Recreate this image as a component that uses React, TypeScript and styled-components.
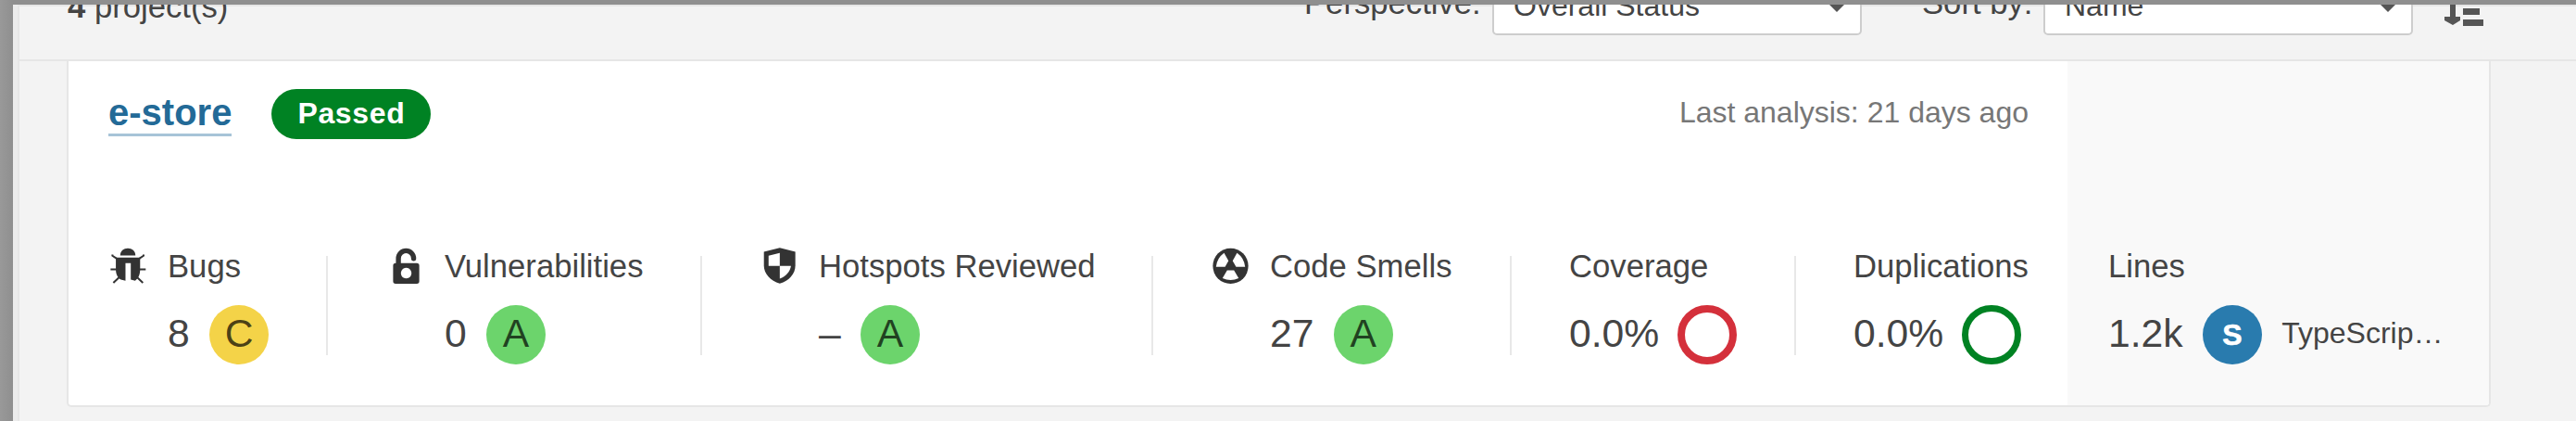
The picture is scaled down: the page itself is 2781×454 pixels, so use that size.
import React from "react";
import styled, { createGlobalStyle } from "styled-components";

const Global = createGlobalStyle`
  * { box-sizing: border-box; }
  body { margin: 0; background: #f3f3f3; font-family: "Liberation Sans", Arial, sans-serif; color: #444; }
`;

const Backdrop = styled.div`
  height: 454px;
  padding: 5px 0 0 14px;
  background: linear-gradient(90deg, #999 0, #8f8f8f 14px);
  overflow: hidden;
`;

const Panel = styled.div`
  height: 449px;
  padding-left: 5px;
  background: #ececec;
  overflow: hidden;
`;

const Content = styled.main`
  height: 100%;
  border-left: 2px solid #e6e6e6;
  background: #f3f3f3;
`;

const TopBar = styled.header`
  display: flex;
  align-items: flex-end;
  height: 61px;
  padding-left: 52px;
  border-bottom: 2px solid #e6e6e6;
  box-shadow: inset 0 2px 0 #e6e6e6;
  overflow: hidden;
`;

const BarText = styled.span<{ $bottom: number; $width: number }>`
  flex: none;
  width: ${(p) => p.$width}px;
  margin-bottom: ${(p) => p.$bottom}px;
  font-size: 34.67px;
  line-height: 40px;
  white-space: nowrap;
`;

const Select = styled.div<{ $gap: number }>`
  flex: none;
  display: flex;
  align-items: center;
  justify-content: space-between;
  width: 399px;
  height: 64px;
  margin: 0 ${(p) => p.$gap}px 26px 0;
  padding: 0 14px 0 21px;
  border: 2px solid #cdcdcd;
  border-radius: 5px;
  background: #fff;
  font-size: 32px;
  line-height: 38px;
`;

const Caret = styled.i`
  border: 11px solid transparent;
  border-top-color: #555;
  border-bottom: 0;
  margin-bottom: -2px;
`;

const SortIcon = styled.svg`
  flex: none;
  width: 44px;
  height: 43px;
  margin-bottom: 29px;
`;

const Card = styled.article`
  display: flex;
  width: 2617px;
  height: 373px;
  margin-left: 51px;
  border: solid #e6e6e6;
  border-width: 0 2px 2px;
  border-radius: 0 0 5px 5px;
  background: #fff;
  overflow: hidden;
`;

const Main = styled.section`
  flex: 1;
  padding-left: 43px;
`;

const Side = styled.aside`
  width: 455px;
  padding: 210px 0 0 44px;
  background: #f9f9f9;
`;

const CardHead = styled.div`
  display: flex;
  align-items: flex-start;
  height: 210px;
  padding: 30px 42px 0 0;
`;

const ProjectLink = styled.a`
  height: 51px;
  border-bottom: 3px solid #a7c4d8;
  color: #236a97;
  font-size: 40px;
  font-weight: 700;
  line-height: 50px;
`;

const Badge = styled.span`
  width: 172px;
  height: 54px;
  margin-left: 43px;
  border-radius: 27px;
  background: #008223;
  color: #fff;
  font-size: 32px;
  font-weight: 700;
  line-height: 52px;
  letter-spacing: 0.64px;
  text-align: center;
`;

const Analysis = styled.span`
  margin-left: auto;
  color: #777;
  font-size: 32px;
  line-height: 51px;
`;

const Measures = styled.div`
  display: grid;
  grid-template-columns: 235px 404px 487px 387px 307px 1fr;
  grid-template-rows: 107px;
`;

const Measure = styled.div`
  padding-left: 62px;
  border-left: 2px solid #e8e8e8;
  &:first-child { padding-left: 0; border-left: 0; }
`;

const Label = styled.div`
  display: flex;
  align-items: center;
  gap: 21px;
  height: 45px;
  margin-top: -11px;
  font-size: 34.67px;
  white-space: nowrap;
`;

const Icon = styled.svg`
  flex: none;
  width: 43px;
  height: 43px;
  margin-bottom: 2px;
  fill: #333;
`;

const ValueRow = styled.div<{ $indent?: boolean; $gap?: number }>`
  display: flex;
  align-items: center;
  gap: ${(p) => p.$gap ?? 21.3}px;
  height: 64px;
  margin-top: 19px;
  padding-left: ${(p) => (p.$indent ? 64 : 0)}px;
  font-size: 42.67px;
  white-space: nowrap;
`;

const Value = styled.span`
  line-height: 50px;
  margin-bottom: 4px;
`;

const Rating = styled.span<{ $color: string }>`
  width: 64px;
  height: 64px;
  border-radius: 50%;
  background: ${(p) => p.$color};
  color: rgba(0, 0, 0, 0.7);
  line-height: 60px;
  text-align: center;
`;

const Ring = styled.span<{ $color: string; $size: number }>`
  width: 64px;
  height: 64px;
  border: ${(p) => p.$size}px solid ${(p) => p.$color};
  border-radius: 50%;
`;

const SizeDot = styled(Rating)`
  color: #fff;
  font-size: 32px;
  font-weight: 700;
  line-height: 64px;
  -webkit-text-stroke: 0.6px #fff;
`;

const Language = styled.span`
  font-size: 32px;
  line-height: 38px;
  margin-bottom: 5px;
`;

const BugIcon = () => (
  <Icon viewBox="0 0 128 128">
    <path d="M38 31C38 17 49 8 62.500 8S87 17 87 31z" />
    <path d="M24 38H102V76C102 94 95 107 86 112L72 109V56H55V112L40 109C30 102 24 92 24 76z" />
    <path d="M13 28V32L28 42M113 28V32L98 42M7 76H26M100 76H120M16 119L34 102M111 119L93 102" fill="none" stroke="#333" strokeWidth="6" />
  </Icon>
);

const LockIcon = () => (
  <Icon viewBox="0 0 128 128">
    <path fillRule="evenodd" d="M33 56H101Q109 56 109 64V114Q109 122 101 122H33Q25 122 25 114V64Q25 56 33 56zM67 71a17 17 0 1 0 .1 0z" />
    <path d="M42 58V41A24.500 25 0 0 1 91 41" fill="none" stroke="#333" strokeWidth="16" strokeLinecap="round" />
  </Icon>
);

const ShieldIcon = () => (
  <Icon viewBox="0 0 128 128">
    <path d="M65 7L115 19V63C115 90 95 112 65 121C35 112 14 90 14 63V19z" />
    <path d="M65 23V65H29V32zM65 65H101C98 84 85 98 65 106z" fill="#fff" />
  </Icon>
);

const RadiationIcon = () => (
  <Icon viewBox="0 0 128 128">
    <circle cx="64" cy="65" r="57" />
    {[0, 120, 240].map((angle) => (
      <path key={angle} d="M53 79H75L90 104Q64 116 38 104z" fill="#fff" transform={`rotate(${angle} 64 65)`} />
    ))}
  </Icon>
);

const GREEN = "#6cd46c";

export default function App() {
  return (
    <>
      <Global />
      <Backdrop>
        <Panel>
          <Content>
            <TopBar>
              <BarText $bottom={37} $width={1335}><b>4</b> project(s)</BarText>
              <BarText $bottom={41} $width={203}>Perspective:</BarText>
              <Select $gap={65}>Overall Status<Caret /></Select>
              <BarText $bottom={41} $width={131}>Sort by:</BarText>
              <Select $gap={33}>Name<Caret /></Select>
              <SortIcon viewBox="0 0 44 43" fill="#555">
                <path d="M7 0H13V26H18V30L10 35L1 30V26H7zM21 17H39V24H21zM21 29H43V36H21zM21 5H34V11H21z" />
              </SortIcon>
            </TopBar>
            <Card>
              <Main>
                <CardHead>
                  <ProjectLink>e-store</ProjectLink>
                  <Badge>Passed</Badge>
                  <Analysis>Last analysis: 21 days ago</Analysis>
                </CardHead>
                <Measures>
                  <Measure>
                    <Label><BugIcon />Bugs</Label>
                    <ValueRow $indent><Value>8</Value><Rating $color="#f4d348">C</Rating></ValueRow>
                  </Measure>
                  <Measure>
                    <Label><LockIcon />Vulnerabilities</Label>
                    <ValueRow $indent><Value>0</Value><Rating $color={GREEN}>A</Rating></ValueRow>
                  </Measure>
                  <Measure>
                    <Label><ShieldIcon />Hotspots Reviewed</Label>
                    <ValueRow $indent><Value>–</Value><Rating $color={GREEN}>A</Rating></ValueRow>
                  </Measure>
                  <Measure>
                    <Label><RadiationIcon />Code Smells</Label>
                    <ValueRow $indent><Value>27</Value><Rating $color={GREEN}>A</Rating></ValueRow>
                  </Measure>
                  <Measure>
                    <Label>Coverage</Label>
                    <ValueRow $gap={19.5}><Value>0.0%</Value><Ring $color="#d4303b" $size={8} /></ValueRow>
                  </Measure>
                  <Measure>
                    <Label>Duplications</Label>
                    <ValueRow $gap={19.5}><Value>0.0%</Value><Ring $color="#008223" $size={7} /></ValueRow>
                  </Measure>
                </Measures>
              </Main>
              <Side>
                <Label>Lines</Label>
                <ValueRow>
                  <Value>1.2k</Value>
                  <SizeDot $color="#297bae">S</SizeDot>
                  <Language>TypeScrip…</Language>
                </ValueRow>
              </Side>
            </Card>
          </Content>
        </Panel>
      </Backdrop>
    </>
  );
}
